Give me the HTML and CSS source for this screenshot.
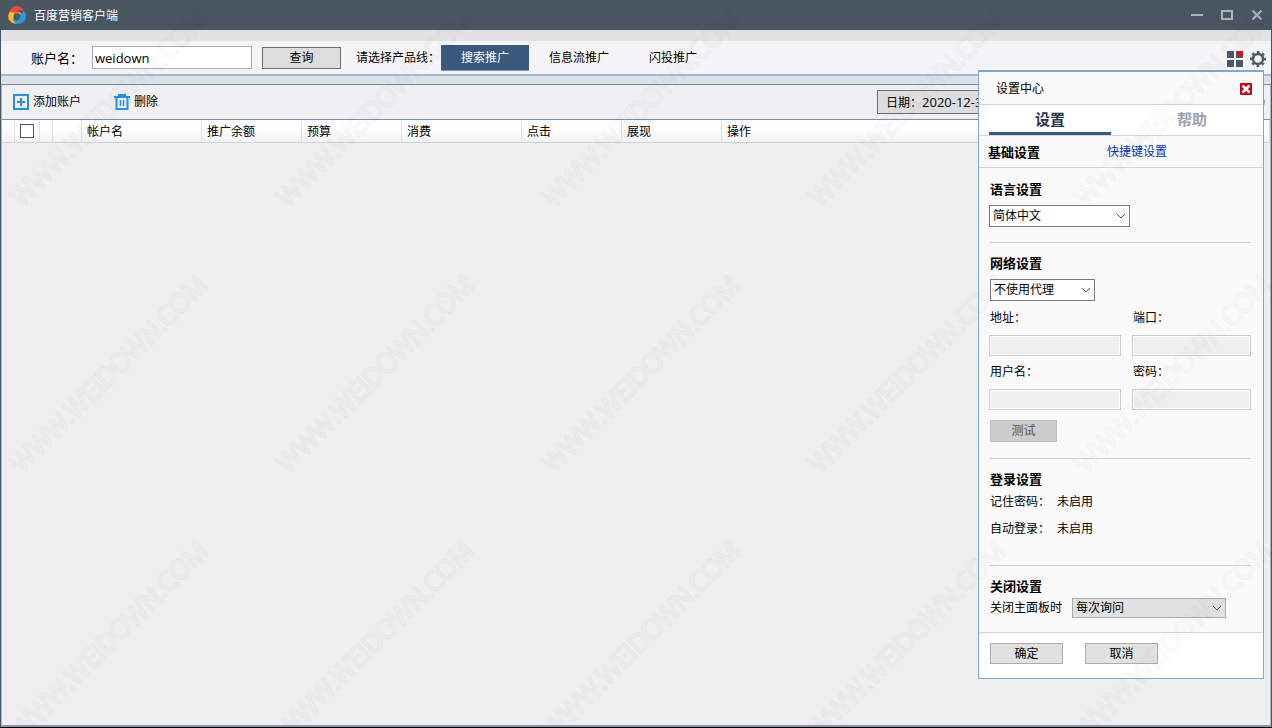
FILE: index.html
```html
<!DOCTYPE html>
<html lang="zh-CN">
<head>
<meta charset="utf-8">
<title>百度营销客户端</title>
<link rel="stylesheet" href="styles.css">
</head>
<body>
<div class="app">
  <header class="titlebar">
    <svg class="logo" viewBox="0 0 18 18" aria-hidden="true">
      <path d="M2 7C1.800 3 4.500 0 8.500 0c3.800 0 6.300 2 7.200 5.500C13 3.800 10 4 8 6 7 7 5 8 2 7Z" fill="#ee4a38"/>
      <path d="M2.300 5C-.2 8-.5 12 1.700 14.800c1.800 2.300 4.800 3.300 7.500 2.900C6.500 16 5.300 13.500 5.600 10.500 5.800 8.500 6.500 7 8 6 5.500 7 3 6.800 2.300 5Z" fill="#fbb828"/>
      <path d="M15.300 4.500c2.500 2 3.200 5 2.200 8-1 3.200-4 5.300-7.300 5.300-3 0-5-1.800-5-4.500 2.500 1.700 5.300 1.300 6.500-.8 1-1.800.8-3.500-.5-4.800 2.500.4 4.100-.8 4.100-3.200Z" fill="#2a9be8"/>
      <path d="M6.500 7.500c1.500-2 4-2.600 6-1.300 1.200.8 1.500 1.800 1 2.800-1.200-1.500-3.500-1.500-7-1.500Z" fill="#f07a4a"/>
      <path d="M7 9.500c1.800-1.500 4-.5 4 1.500 0 1.500-1.300 2.500-3 2.200C9 12 8.500 10.500 7 9.500Z" fill="#48606e"/>
    </svg>
    <h1 class="app-name">百度营销客户端</h1>
    <div class="window-buttons">
      <button type="button" aria-label="最小化"><svg viewBox="0 0 12 12"><path d="M0 6h12" stroke="#aab3ba" stroke-width="2"/></svg></button>
      <button type="button" aria-label="最大化"><svg viewBox="0 0 12 12"><path d="M1 2h10v8H1z" fill="none" stroke="#aab3ba" stroke-width="2"/></svg></button>
      <button type="button" aria-label="关闭"><svg viewBox="0 0 12 12"><path d="M1.500 1.500l9 9m0-9l-9 9" stroke="#aab3ba" stroke-width="2"/></svg></button>
    </div>
  </header>

  <div class="strip"></div>
  <div class="toolbar">
    <label class="account-label" for="account">账户名：</label>
    <input class="account-input" id="account" type="text" value="weidown">
    <button class="query" type="button">查询</button>
    <span class="product-label">请选择产品线：</span>
    <nav class="products">
      <button class="product active" type="button">搜索推广</button>
      <button class="product" type="button">信息流推广</button>
      <button class="product" type="button">闪投推广</button>
    </nav>
    <div class="tools">
      <button type="button" aria-label="应用"><svg viewBox="0 0 16 16"><path d="M0 0h7v7H0zM9 0h7v7H9zM0 9h7v7H0zM9 9h7v7H9z" fill="#4a5964"/><circle cx="13.500" cy="2.500" r="2.800" fill="#f00"/></svg></button>
      <button type="button" aria-label="设置"><svg viewBox="0 0 16 16"><circle cx="8" cy="8" r="5" fill="none" stroke="#4a5964" stroke-width="2.400"/><circle cx="8" cy="8" r="7" fill="none" stroke="#4a5964" stroke-width="2" stroke-dasharray="2.750 2.750" stroke-dashoffset="1.370"/></svg></button>
    </div>
  </div>
  <div class="band"></div>

  <main class="workspace">
    <div class="actions">
      <button class="action" type="button">
        <svg viewBox="0 0 16 16"><path d="M1 1h14v14H1z" fill="none" stroke="#2090f0" stroke-width="2"/><path d="M8 4v8M4 8h8" stroke="#2090f0" stroke-width="2"/></svg>
        添加账户
      </button>
      <button class="action delete" type="button">
        <svg viewBox="0 0 16 16" fill="none" stroke="#2090f0"><path d="M0 3h16" stroke-width="2"/><path d="M5 3V1h6v2M2.500 3v12h11V3" stroke-width="2"/><path d="M6.500 6v6M9.500 6v6" stroke-width="1.500"/></svg>
        删除
      </button>
      <button class="date" type="button">日期：<span>2020-12-31</span></button>
      <button class="refresh" type="button" aria-label="刷新"><svg viewBox="0 0 16 16"><circle cx="8" cy="8" r="6.500" fill="none" stroke="#2090f0" stroke-width="2.500"/></svg></button>
    </div>
    <table class="accounts">
      <colgroup>
        <col class="w-edge"><col class="w-check"><col class="w-mark"><col class="w-state"><col class="w-wide"><col class="w-std"><col class="w-std"><col class="w-wide"><col class="w-std"><col class="w-std"><col>
      </colgroup>
      <thead>
        <tr>
          <th></th>
          <th class="check"><input type="checkbox" aria-label="全选"></th>
          <th></th><th></th>
          <th>帐户名</th><th>推广余额</th><th>预算</th><th>消费</th><th>点击</th><th>展现</th><th>操作</th>
        </tr>
      </thead>
    </table>
  </main>

  <section class="panel" aria-label="设置中心">
    <header class="panel-head">
      <h2>设置中心</h2>
      <button class="panel-close" type="button" aria-label="关闭"><svg viewBox="0 0 12 12"><path d="M2.500 2.500l7 7m0-7l-7 7" stroke="#fff" stroke-width="2.600"/></svg></button>
    </header>
    <nav class="tabs">
      <button class="tab active" type="button">设置</button>
      <button class="tab" type="button">帮助</button>
    </nav>
    <nav class="subtabs">
      <strong>基础设置</strong>
      <a href="#shortcuts">快捷键设置</a>
    </nav>
    <form class="settings">
      <section class="group">
        <h3><label for="lang">语言设置</label></h3>
        <div class="select lang">
          <select id="lang"><option>简体中文</option></select>
          <svg viewBox="0 0 10 6"><path d="M1 1l4 4 4-4"/></svg>
        </div>
      </section>
      <section class="group">
        <h3><label for="proxy">网络设置</label></h3>
        <div class="select proxy">
          <select id="proxy"><option>不使用代理</option></select>
          <svg viewBox="0 0 10 6"><path d="M1 1l4 4 4-4"/></svg>
        </div>
        <div class="fields">
          <div class="field"><label for="addr">地址：</label><input id="addr" type="text" disabled></div>
          <div class="field"><label for="port">端口：</label><input id="port" type="text" disabled></div>
          <div class="field"><label for="user">用户名：</label><input id="user" type="text" disabled></div>
          <div class="field"><label for="pass">密码：</label><input id="pass" type="password" disabled></div>
        </div>
        <button class="test" type="button" disabled>测试</button>
      </section>
      <section class="group login">
        <h3>登录设置</h3>
        <dl>
          <dt>记住密码：</dt><dd>未启用</dd>
          <dt>自动登录：</dt><dd>未启用</dd>
        </dl>
      </section>
      <section class="group closing">
        <h3>关闭设置</h3>
        <div class="close-row">
          <label for="onclose">关闭主面板时</label>
          <div class="select onclose">
            <select id="onclose"><option>每次询问</option></select>
            <svg viewBox="0 0 10 6"><path d="M1 1l4 4 4-4"/></svg>
          </div>
        </div>
      </section>
    </form>
    <footer class="panel-foot">
      <button type="button">确定</button>
      <button type="button">取消</button>
    </footer>
  </section>

  <svg class="watermark" aria-hidden="true">
    <defs>
      <mask id="outline" maskUnits="userSpaceOnUse" x="0" y="0" width="266" height="266">
        <text class="mark-edge" transform="translate(22 208) rotate(-45)">WWW.WEIDOWN.COM</text>
        <text class="mark-core" transform="translate(22 208) rotate(-45)">WWW.WEIDOWN.COM</text>
      </mask>
      <pattern id="mark" width="266" height="266" patternUnits="userSpaceOnUse">
        <rect class="mark-ink" width="266" height="266" mask="url(#outline)"/>
      </pattern>
    </defs>
    <rect width="100%" height="100%" fill="url(#mark)"/>
  </svg>
</div>
</body>
</html>
```

FILE: styles.css
```css
* { box-sizing: border-box; }

body {
  margin: 0;
  font: 12px/16px "Open Sans", "Noto Sans CJK SC", sans-serif;
  color: #000;
}

h1, h2, h3, dl, dd { margin: 0; font-size: inherit; font-weight: inherit; }

button, input, select { font: inherit; color: inherit; margin: 0; padding: 0; border-radius: 0; }
button { border: 0; background: none; }
svg { display: block; }

.app {
  position: relative;
  display: flex;
  flex-direction: column;
  min-height: 100vh;
  background: #efefef;
  border: solid #485660;
  border-width: 0 1px 0 1px;
  border-bottom: 1px solid #000;
}

/* title bar */
.titlebar {
  display: flex;
  align-items: center;
  height: 30px;
  margin: 0 -1px;
  padding: 0 9px 0 8px;
  background: #485660;
  color: #fff;
}
.logo { width: 18px; height: 18px; margin-right: 8px; }
.app-name { line-height: 18px; padding-top: 1px; }
.window-buttons { display: flex; gap: 18px; margin-left: auto; }
.window-buttons svg { width: 12px; height: 12px; }

/* top toolbar */
.strip { height: 11px; background: #e2e2e2; }
.toolbar {
  display: flex;
  align-items: center;
  height: 33px;
  padding: 0 5px 0 30px;
  background: #f4f4f6;
}
.account-label { width: 61px; font-size: 13px; }
.account-input {
  width: 160px;
  height: 23px;
  padding: 0 2px;
  border: 1px solid #abadb3;
  background: #fff;
  font-size: 13px;
}
.query {
  width: 79px;
  height: 22px;
  margin-left: 10px;
  border: 1px solid #707070;
  background: #ddd;
}
.product-label { width: 85px; margin-left: 15px; }
.products { display: flex; }
.product { height: 26px; padding: 1px 20px 0; }
.product.active { background: #39597f; border-bottom: 1px solid #8097b3; color: #fff; }
.tools { display: flex; gap: 7px; margin-left: auto; padding-top: 3px; }
.tools svg { width: 16px; height: 16px; }
.band {
  height: 11px;
  border-top: 2px solid #a9b8cc;
  border-bottom: 1px solid #718ca8;
  background: #dde2e9;
}

/* account list */
.workspace {
  flex: 1;
  border: solid #b4b8bc;
  border-width: 0 1px;
  border-bottom: 2px solid #8499b0;
}
.actions {
  display: flex;
  align-items: center;
  height: 35px;
  padding-left: 11px;
  background: #f0f0f3;
  border-bottom: 1px solid #7390ad;
}
.action { display: flex; align-items: center; gap: 4px; line-height: 18px; }
.action svg { width: 16px; height: 16px; }
.delete { margin-left: 33px; }
.date {
  width: 355px;
  height: 24px;
  margin-left: auto;
  padding: 0 8px;
  border: 1px solid #707070;
  background: #ddd;
  text-align: left;
}
.date span { font-size: 13px; }
.refresh { margin: 0 5px 0 17px; }
.refresh svg { width: 16px; height: 16px; }

.accounts { width: 100%; table-layout: fixed; border-collapse: separate; border-spacing: 0; }
.accounts th {
  height: 23px;
  padding: 2px 0 0 5px;
  border-right: 1px solid #dfe1e4;
  border-bottom: 1px solid #d0d3d6;
  background: linear-gradient(#fff 0 40%, #f1f2f4);
  font-weight: normal;
  text-align: left;
}
.accounts .check { padding: 0; }
.check input {
  display: block;
  appearance: none;
  width: 14px;
  height: 14px;
  margin: 0 auto;
  border: 1px solid #555;
  background: #fff;
}
.w-edge { width: 13px; }
.w-check { width: 25px; }
.w-mark { width: 13px; }
.w-state { width: 29px; }
.w-wide { width: 120px; }
.w-std { width: 100px; }

/* settings panel */
.panel {
  position: absolute;
  top: 70px;
  right: 7px;
  width: 286px;
  border: 1px solid #7aaad4;
  border-top-width: 2px;
  background: #fff;
}
.panel-head {
  display: flex;
  align-items: center;
  justify-content: space-between;
  height: 33px;
  padding: 1px 11px 0 17px;
  background: #fafafa;
  border-bottom: 1px solid #cfd3e3;
}
.panel-close { background: #c8000a; border-radius: 1px; }
.panel-close svg { width: 12px; height: 12px; }
.tabs {
  display: flex;
  gap: 20px;
  height: 31px;
  padding: 0 10px;
  border-bottom: 1px solid #cfd3e3;
}
.tab {
  width: 122px;
  border-bottom: 3px solid transparent;
  color: #9ba3af;
  font-size: 15px;
  font-weight: bold;
}
.tab.active { border-color: #39597f; color: #26364f; }
.subtabs {
  display: flex;
  align-items: center;
  gap: 67px;
  height: 32px;
  padding: 0 9px;
  background: #fafafa;
  border-bottom: 1px solid #cfd3e3;
}
.subtabs strong { font-size: 13px; }
.subtabs a { padding-top: 1px; color: #0033c8; text-decoration: none; }

.settings {
  padding: 1px 12px 0 10px;
  background: #fafafa;
  border-bottom: 1px solid #cfd3e3;
}
.group { padding: 10px 0 15px; border-bottom: 1px solid #cbd3e2; }
.group h3 { padding-left: 1px; font-size: 13px; font-weight: bold; line-height: 20px; }
.select { display: grid; align-items: center; border: 1px solid #7a7a7a; background: #fff; }
.select select {
  grid-area: 1 / 1;
  appearance: none;
  width: 100%;
  height: 20px;
  padding: 0 3px;
  border: 0;
  background: none;
  line-height: 18px;
}
.select svg {
  grid-area: 1 / 1;
  justify-self: end;
  width: 10px;
  height: 6px;
  margin-right: 3px;
  fill: none;
  stroke: #555;
  pointer-events: none;
}
.lang { width: 141px; margin-top: 6px; }
.proxy { width: 105px; margin: 6px 0 9px 1px; }
.fields { display: grid; grid-template-columns: 132px 1fr; gap: 8px 11px; }
.field { display: flex; flex-direction: column; gap: 9px; }
.field label { padding-left: 1px; }
.field input {
  width: 100%;
  height: 21px;
  border: 1px solid #ccc;
  background: #efefef;
  box-shadow: inset 0 0 0 1px #fff;
}
.test {
  width: 67px;
  height: 22px;
  margin: 10px 0 1px 1px;
  border: 1px solid #bfbfbf;
  background: #ccc;
  color: #555;
}
.login dl { display: grid; grid-template-columns: 67px 1fr; row-gap: 11px; padding: 5px 0 13px 1px; }
.closing { padding-bottom: 14px; border-bottom: 0; }
.close-row { display: flex; align-items: center; gap: 10px; padding: 2px 0 0 1px; }
.onclose { width: 154px; border-color: #adadad; background: #e1e1e1; }
.onclose select { height: 18px; }

.panel-foot { display: flex; gap: 22px; padding: 10px 11px 14px; }
.panel-foot button {
  width: 73px;
  height: 21px;
  border: 1px solid #adadad;
  background: #e1e1e1;
}

.watermark {
  position: absolute;
  inset: 0 -1px 0 -1px;
  width: calc(100% + 2px);
  height: 100%;
  pointer-events: none;
}
.mark-edge, .mark-core { font: 300 26px "Open Sans", sans-serif; stroke-linejoin: round; }
.mark-edge { fill: #fff; stroke: #fff; stroke-width: 3px; }
.mark-core { fill: #000; fill-opacity: 0.7; }
.mark-ink { fill: #000; fill-opacity: 0.028; }
```
